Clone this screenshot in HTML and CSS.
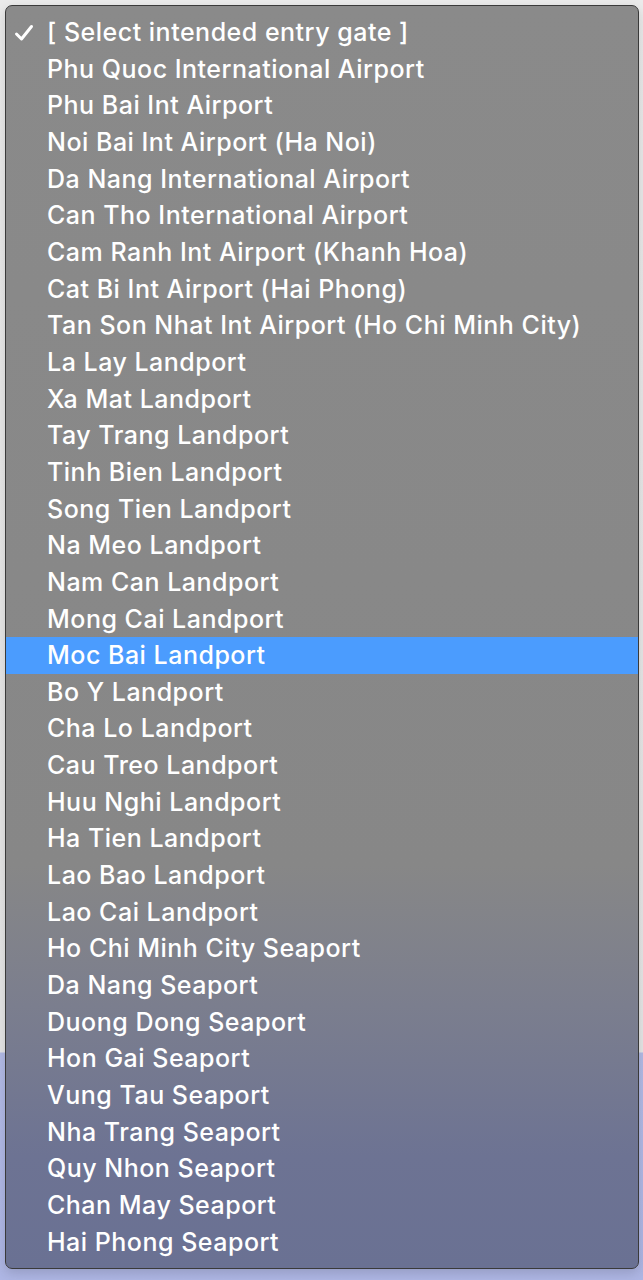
FILE: index.html
```html
<!DOCTYPE html>
<html lang="en">
<head>
    <meta charset="UTF-8">
    <title>Entry gate</title>
    <link rel="stylesheet" href="styles.css">
</head>
<body>
    <div class="menu">
        <div class="item checked">
            <svg class="check" width="20" height="18" viewBox="0 0 20 18"><path d="M2.5 10 L7.5 15 L17.5 2.5" fill="none" stroke="#fff" stroke-width="3" stroke-linecap="round" stroke-linejoin="round"/></svg>
            [ Select intended entry gate ]
        </div>
        <div class="item">Phu Quoc International Airport</div>
        <div class="item">Phu Bai Int Airport</div>
        <div class="item">Noi Bai Int Airport (Ha Noi)</div>
        <div class="item">Da Nang International Airport</div>
        <div class="item">Can Tho International Airport</div>
        <div class="item">Cam Ranh Int Airport (Khanh Hoa)</div>
        <div class="item">Cat Bi Int Airport (Hai Phong)</div>
        <div class="item">Tan Son Nhat Int Airport (Ho Chi Minh City)</div>
        <div class="item">La Lay Landport</div>
        <div class="item">Xa Mat Landport</div>
        <div class="item">Tay Trang Landport</div>
        <div class="item">Tinh Bien Landport</div>
        <div class="item">Song Tien Landport</div>
        <div class="item">Na Meo Landport</div>
        <div class="item">Nam Can Landport</div>
        <div class="item">Mong Cai Landport</div>
        <div class="item active">Moc Bai Landport</div>
        <div class="item">Bo Y Landport</div>
        <div class="item">Cha Lo Landport</div>
        <div class="item">Cau Treo Landport</div>
        <div class="item">Huu Nghi Landport</div>
        <div class="item">Ha Tien Landport</div>
        <div class="item">Lao Bao Landport</div>
        <div class="item">Lao Cai Landport</div>
        <div class="item">Ho Chi Minh City Seaport</div>
        <div class="item">Da Nang Seaport</div>
        <div class="item">Duong Dong Seaport</div>
        <div class="item">Hon Gai Seaport</div>
        <div class="item">Vung Tau Seaport</div>
        <div class="item">Nha Trang Seaport</div>
        <div class="item">Quy Nhon Seaport</div>
        <div class="item">Chan May Seaport</div>
        <div class="item">Hai Phong Seaport</div>
    </div>
</body>
</html>
```

FILE: styles.css
```css
* {
    margin: 0;
    padding: 0;
    box-sizing: border-box;
}

body {
    font-family: Inter, 'Liberation Sans', Arial, sans-serif;
    background: linear-gradient(to bottom, #ebebeb 0, #e6e6e6 1052px, #b3bbe6 1053px, #aeb6e4 100%);
    min-height: 1280px;
    padding: 5px 5px 0 5px;
}

.menu {
    width: 634px;
    border: 1px solid #3a3a3a;
    border-radius: 7px;
    padding: 8px 0;
    background: linear-gradient(to bottom, #8a8a8a 0, #878787 860px, #7b7e8e 1000px, #6d7393 1150px, #6a7193 100%);
    box-shadow: 0 4px 12px rgba(0, 0, 0, 0.15);
}

.item {
    position: relative;
    height: 36.67px;
    line-height: 36.67px;
    padding-left: 41px;
    font-size: 25px;
    font-weight: 500;
    letter-spacing: 0.5px;
    color: #fff;
    white-space: nowrap;
}

.item.active {
    background-color: #4b9cfe;
}

.check {
    position: absolute;
    left: 8px;
    top: 10px;
}
```
